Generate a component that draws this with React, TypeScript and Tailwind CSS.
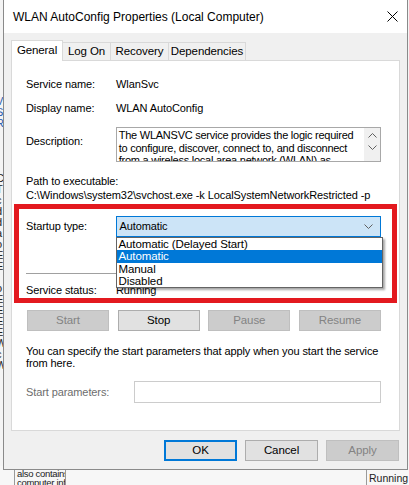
import React from "react";

const F = { fontFamily: '"Liberation Sans", Arial, sans-serif' };

function Chevron({ up = false }: { up?: boolean }) {
  return (
    <svg width="9" height="5" viewBox="0 0 9 5" className="block">
      <polyline
        points={up ? "0.5,4.5 4.5,0.5 8.5,4.5" : "0.5,0.5 4.5,4.5 8.5,0.5"}
        fill="none"
        stroke="#606060"
        strokeWidth="1"
      />
    </svg>
  );
}

function Btn({ label, disabled = false, primary = false, w = "w-[82px]" }: { label: string; disabled?: boolean; primary?: boolean; w?: string }) {
  const cls = disabled
    ? "bg-[#cccccc] border border-[#bfbfbf] text-[#838383]"
    : primary
    ? "bg-[#e1e1e1] border-2 border-[#0078d7] text-black"
    : "bg-[#e1e1e1] border border-[#adadad] text-black";
  return (
    <div className={`${w} h-[21px] flex items-center justify-center text-[11.5px] ${cls}`}>{label}</div>
  );
}

export default function App() {
  const leftMarks = ["V", "S", "R", "", "", "", "", "C", "T", "c", "d", "d", "a", "o", "E", "E", "", "o", "E", "E", "E", "E", "W", "c", "W", "I"];
  return (
    <div className="relative w-[409px] h-[485px] overflow-hidden bg-[#f4f4f4] text-black" style={F}>
      {/* background window fragments */}
      <div className="absolute left-0 top-[96px] w-[3px] overflow-hidden flex flex-col text-[11px] leading-[11px]">
        {leftMarks.map((m, i) => (
          <div key={i} className={`h-[11px] -ml-[4px] ${i < 3 ? "text-[#2a5db0]" : "text-[#222]"}`}>{m || "\u00a0"}</div>
        ))}
      </div>
      <div className="absolute left-0 right-0 top-[466px] bottom-0 bg-[#f7f7f7] flex">
        <div className="w-[14px]" />
        <div className="w-[52px] border-l border-r border-[#9a9a9a] pl-[2px] pt-[3px] text-[9.5px] leading-[9px] tracking-[-0.3px] text-[#222] overflow-hidden whitespace-nowrap">
          <div>also contains</div>
          <div>computer inf</div>
        </div>
        <div className="flex-1" />
        <div className="w-[43px] border-l border-[#9a9a9a] pl-[2px] pt-[7px] text-[10.5px] leading-[11px] text-[#222]">Running</div>
      </div>

      {/* dialog window */}
      <div className="absolute left-[3px] top-0 w-[405px] h-[470px] bg-[#f0f0f0] border-l border-r border-b border-[#8a8a8a] flex flex-col">
        {/* title bar */}
        <div className="h-[33px] bg-white flex items-center justify-between pl-[9px] pr-[9px] shrink-0">
          <span className="text-[12px]">WLAN AutoConfig Properties (Local Computer)</span>
          <svg width="11" height="11" viewBox="0 0 11 11">
            <line x1="0.5" y1="0.5" x2="10.5" y2="10.5" stroke="#000" strokeWidth="1" />
            <line x1="10.5" y1="0.5" x2="0.5" y2="10.5" stroke="#000" strokeWidth="1" />
          </svg>
        </div>

        <div className="pl-[7px] pr-[7px] pt-[7px] flex flex-col tracking-[-0.1px]">
          {/* tabs */}
          <div className="flex items-end h-[21px] relative z-10 text-[11.5px]">
            <div className="w-[52px] h-[21px] bg-white border border-[#d9d9d9] border-b-0 flex items-center justify-center pb-[1px]">General</div>
            <div className="w-[48px] h-[18px] border-t border-r border-[#d9d9d9] flex items-center justify-center mb-[1px]">Log On</div>
            <div className="w-[58px] h-[18px] border-t border-r border-[#d9d9d9] flex items-center justify-center mb-[1px]">Recovery</div>
            <div className="w-[77px] h-[18px] border-t border-r border-[#d9d9d9] flex items-center justify-center mb-[1px]">Dependencies</div>
          </div>

          {/* panel */}
          <div className="-mt-[1px] h-[371px] bg-white border border-[#d9d9d9] text-[11px]">
            <div className="flex flex-col pl-[14px] pr-[18px]">
              <div className="h-[16px] mt-[15px] flex items-center">
                <span className="w-[90px]">Service name:</span>
                <span>WlanSvc</span>
              </div>
              <div className="h-[16px] mt-[8px] flex items-center">
                <span className="w-[90px]">Display name:</span>
                <span>WLAN AutoConfig</span>
              </div>
              <div className="mt-[11px] flex">
                <span className="w-[90px] pt-[6px]">Description:</span>
                <div className="w-[266px] h-[35px] border border-[#a8a8a8] bg-white flex overflow-hidden">
                  <div className="flex-1 pl-[2px] pt-[1px] text-[11px] leading-[12.5px] tracking-[-0.25px] overflow-hidden">
                    The WLANSVC service provides the logic required to configure, discover, connect to, and disconnect from a wireless local area network (WLAN) as defined by IEEE 802.11 standards.
                  </div>
                  <div className="w-[16px] bg-[#f0f0f0] flex flex-col items-center pt-[5px] gap-[7px]">
                    <Chevron up />
                    <Chevron />
                  </div>
                </div>
              </div>
              <div className="mt-[12px] h-[14px] flex items-center">Path to executable:</div>
              <div className="h-[15px] flex items-center whitespace-nowrap">C:\Windows\system32\svchost.exe -k LocalSystemNetworkRestricted -p</div>

              {/* red annotation box */}
              <div className="mt-[1px] -ml-[12px] -mr-[16px] h-[99px] border-[5px] border-[#e3191f] pl-[7px] pr-[11px] pt-[7px] flex flex-col">
                <div className="h-[21px] flex items-center">
                  <span className="w-[90px]">Startup type:</span>
                  <div className="relative w-[267px] h-[21px]">
                    <div className="w-full h-full bg-[#cce4f7] border border-[#0078d7] flex items-center justify-between pl-[3px] pr-[7px]">
                      <span>Automatic</span>
                      <Chevron />
                    </div>
                    <div className="absolute left-0 top-full w-[267px] bg-white border border-[#646464] shadow-[2px_2px_2px_rgba(0,0,0,0.35)] z-20 flex flex-col text-[11.5px]">
                      <div className="h-[12px] leading-[12px] pl-[2px]">Automatic (Delayed Start)</div>
                      <div className="h-[13px] leading-[13px] pl-[2px] bg-[#0078d7] text-white">Automatic</div>
                      <div className="h-[12px] leading-[12px] pl-[2px]">Manual</div>
                      <div className="h-[12px] leading-[12px] pl-[2px]">Disabled</div>
                    </div>
                  </div>
                </div>
                <div className="mt-[36px] h-[1px] bg-[#a0a0a0]" />
                <div className="h-[16px] mt-[8px] flex items-center">
                  <span className="w-[90px]">Service status:</span>
                  <span>Running</span>
                </div>
              </div>

              {/* buttons */}
              <div className="mt-[7px] pl-[1px] flex justify-between">
                <Btn label="Start" disabled />
                <Btn label="Stop" />
                <Btn label="Pause" disabled />
                <Btn label="Resume" disabled />
              </div>

              <div className="mt-[14px] leading-[12px]">
                You can specify the start parameters that apply when you start the service from here.
              </div>

              <div className="mt-[12px] flex items-center">
                <span className="w-[108px] text-[#6d6d6d]">Start parameters:</span>
                <div className="w-[248px] h-[22px] border border-[#cccccc] bg-white" />
              </div>
            </div>
          </div>

          {/* dialog buttons */}
          <div className="mt-[9px] flex justify-end gap-[8px] pr-[1px]">
            <Btn label="OK" primary w="w-[73px]" />
            <Btn label="Cancel" w="w-[73px]" />
            <Btn label="Apply" disabled w="w-[73px]" />
          </div>
        </div>
      </div>
    </div>
  );
}
